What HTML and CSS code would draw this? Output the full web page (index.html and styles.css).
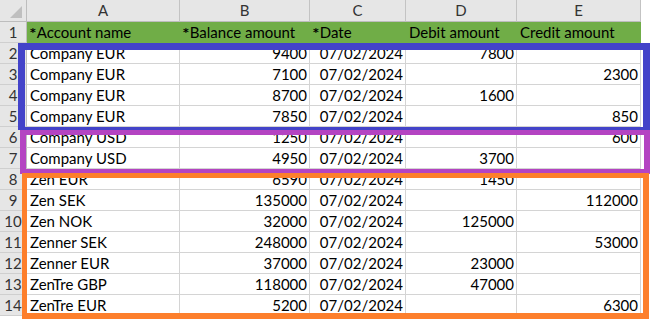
FILE: index.html
```html
<!DOCTYPE html>
<html>
<head>
<meta charset="utf-8">
<link rel="stylesheet" href="styles.css">
</head>
<body>
<div class="sheet">
  <div class="grid">
    <div class="corner"><span class="tri"></span></div>
    <div class="colhdr">A</div>
    <div class="colhdr">B</div>
    <div class="colhdr">C</div>
    <div class="colhdr">D</div>
    <div class="colhdr">E</div>

    <div class="rowhdr">1</div>
    <div class="cell head"><span class="ast">*</span>Account name</div>
    <div class="cell head"><span class="ast">*</span>Balance amount</div>
    <div class="cell head"><span class="ast">*</span>Date</div>
    <div class="cell head">Debit amount</div>
    <div class="cell head">Credit amount</div>

    <div class="rowhdr">2</div><div class="cell">Company EUR</div><div class="cell num">9400</div><div class="cell num">07/02/2024</div><div class="cell num">7800</div><div class="cell num"></div>
    <div class="rowhdr">3</div><div class="cell">Company EUR</div><div class="cell num">7100</div><div class="cell num">07/02/2024</div><div class="cell num"></div><div class="cell num">2300</div>
    <div class="rowhdr">4</div><div class="cell">Company EUR</div><div class="cell num">8700</div><div class="cell num">07/02/2024</div><div class="cell num">1600</div><div class="cell num"></div>
    <div class="rowhdr">5</div><div class="cell">Company EUR</div><div class="cell num">7850</div><div class="cell num">07/02/2024</div><div class="cell num"></div><div class="cell num">850</div>
    <div class="rowhdr">6</div><div class="cell">Company USD</div><div class="cell num">1250</div><div class="cell num">07/02/2024</div><div class="cell num"></div><div class="cell num">600</div>
    <div class="rowhdr">7</div><div class="cell">Company USD</div><div class="cell num">4950</div><div class="cell num">07/02/2024</div><div class="cell num">3700</div><div class="cell num"></div>
    <div class="rowhdr">8</div><div class="cell">Zen EUR</div><div class="cell num">6590</div><div class="cell num">07/02/2024</div><div class="cell num">1450</div><div class="cell num"></div>
    <div class="rowhdr">9</div><div class="cell">Zen SEK</div><div class="cell num">135000</div><div class="cell num">07/02/2024</div><div class="cell num"></div><div class="cell num">112000</div>
    <div class="rowhdr">10</div><div class="cell">Zen NOK</div><div class="cell num">32000</div><div class="cell num">07/02/2024</div><div class="cell num">125000</div><div class="cell num"></div>
    <div class="rowhdr">11</div><div class="cell">Zenner SEK</div><div class="cell num">248000</div><div class="cell num">07/02/2024</div><div class="cell num"></div><div class="cell num">53000</div>
    <div class="rowhdr">12</div><div class="cell">Zenner EUR</div><div class="cell num">37000</div><div class="cell num">07/02/2024</div><div class="cell num">23000</div><div class="cell num"></div>
    <div class="rowhdr">13</div><div class="cell">ZenTre GBP</div><div class="cell num">118000</div><div class="cell num">07/02/2024</div><div class="cell num">47000</div><div class="cell num"></div>
    <div class="rowhdr">14</div><div class="cell">ZenTre EUR</div><div class="cell num">5200</div><div class="cell num">07/02/2024</div><div class="cell num"></div><div class="cell num">6300</div>
  </div>
  <div class="box box-blue"></div>
  <div class="box box-purple"></div>
  <div class="box box-orange"></div>
</div>
</body>
</html>
```

FILE: styles.css
```css
html, body {
  margin: 0;
  padding: 0;
  background: #ffffff;
}
.sheet {
  position: relative;
  width: 651px;
  height: 322px;
  overflow: hidden;
  font-family: Lato, "Liberation Sans", sans-serif;
  font-size: 15px;
  color: #000;
}
.grid {
  display: grid;
  grid-template-columns: 27px 153px 130px 96px 111px 124px;
  grid-template-rows: 22px repeat(14, 21px);
}
.corner, .colhdr, .rowhdr, .cell {
  box-sizing: border-box;
  border-right: 1px solid #d4d4d4;
  border-bottom: 1px solid #d4d4d4;
  white-space: nowrap;
  overflow: hidden;
}
.corner {
  position: relative;
  background: #e6e6e6;
  border-right-color: #bdbdbd;
  border-bottom-color: #bdbdbd;
}
.tri {
  position: absolute;
  right: 4px;
  bottom: 3px;
  width: 0;
  height: 0;
  border-left: 12px solid transparent;
  border-bottom: 12px solid #bfbfbf;
}
.colhdr {
  background: #e6e6e6;
  color: #333;
  text-align: center;
  line-height: 21px;
  border-right-color: #c3c3c3;
  border-bottom-color: #bdbdbd;
}
.rowhdr {
  background: #e6e6e6;
  color: #333;
  text-align: center;
  line-height: 21px;
  border-right-color: #bdbdbd;
  border-bottom-color: #cfcfcf;
}
.cell {
  line-height: 20px;
  padding: 0 2px 0 3px;
}
.cell.head {
  background: #70ad47;
  border-right-color: #70ad47;
  border-bottom-color: #70ad47;
}
.cell.num {
  text-align: right;
}
.ast {
  font-family: "DejaVu Sans", sans-serif;
  font-size: 11px;
  font-weight: bold;
  vertical-align: 2px;
  margin-right: 1px;
}
.box {
  position: absolute;
  box-sizing: border-box;
}
.box-blue {
  left: 18px;
  top: 43px;
  width: 632px;
  height: 87px;
  border: 7px solid #4343c9;
  border-bottom-width: 3px;
}
.box-purple {
  left: 20px;
  top: 130px;
  width: 630px;
  height: 44px;
  border: 5px solid #b444c2;
  border-left-width: 6px;
  border-right-width: 6px;
}
.box-orange {
  left: 22px;
  top: 173px;
  width: 627px;
  height: 146px;
  border: 5px solid #fd7f2c;
  border-right-width: 6px;
  border-bottom-width: 6px;
}
```
